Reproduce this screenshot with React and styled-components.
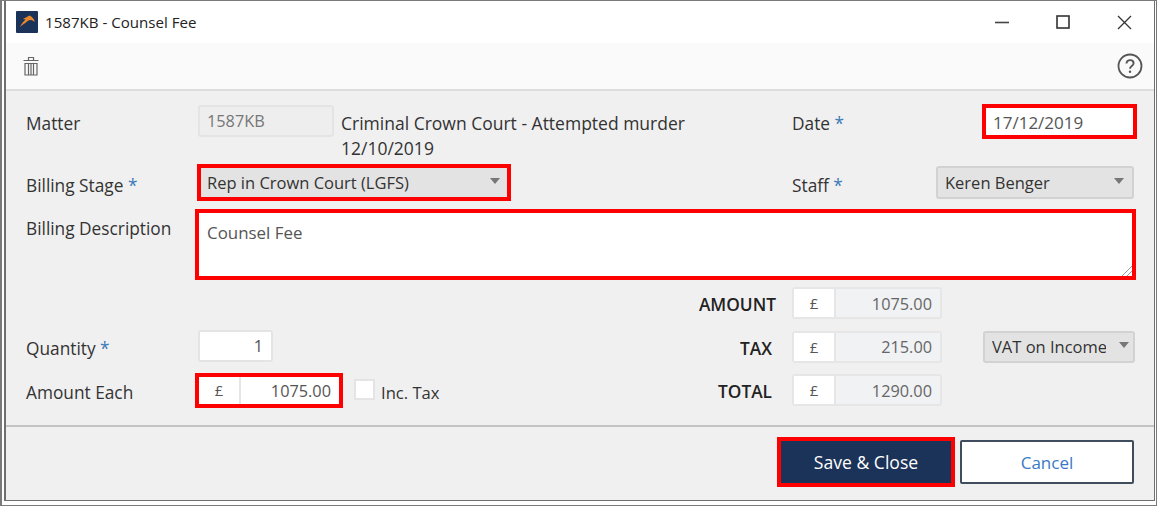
import React from 'react'
import styled, { createGlobalStyle } from 'styled-components'

const GlobalStyle = createGlobalStyle`
  html, body {
    margin: 0;
    padding: 0;
    background: #fff;
  }
  * {
    box-sizing: border-box;
  }
`

const Frame = styled.div`
  width: 1157px;
  height: 506px;
  border: 1px solid #7a7a7a;
  border-left-width: 2px;
  padding: 0 1px 4px 2px;
  font-family: "Open Sans", "Noto Sans", sans-serif;
  font-size: 17.3px;
  color: #333;
`

const Window = styled.div`
  height: 100%;
  display: flex;
  flex-direction: column;
  background: #f0f0f0;
  border: 2px solid #6f6f6f;
  border-top: 0;
  border-right-width: 1px;
  border-bottom-width: 1px;
`

const TitleBar = styled.div`
  height: 42px;
  flex: none;
  display: flex;
  align-items: center;
  background: #fff;
  padding-left: 10px;
`

const AppIcon = styled.svg`
  width: 22px;
  height: 22px;
  margin-right: 7px;
`

const Title = styled.span`
  font-size: 15.1px;
  color: #222;
`

const WindowButtons = styled.div`
  margin-left: auto;
  display: flex;
  gap: 47px;
  padding-right: 22px;
  align-items: center;
`

const Toolbar = styled.div`
  height: 48px;
  flex: none;
  display: flex;
  align-items: center;
  justify-content: space-between;
  background: #fafafa;
  border-bottom: 2px solid #ddd;
  padding: 0 11px 0 17px;
`

const Form = styled.div`
  height: 336px;
  flex: none;
  padding: 14px 19px 0 20px;
  border-bottom: 2px solid #c4c4c4;
`

const Row = styled.div`
  display: grid;
  grid-template-columns: 172px 594px 1fr;
  height: ${props => props.$height}px;
`

const Label = styled.label`
  line-height: 22px;
  padding-top: ${props => props.$top || 0}px;
  color: #333;
`

const Star = styled.span`
  color: #3d7ab8;
`

const Field = styled.div`
  height: 32px;
  width: ${props => props.$width}px;
  display: flex;
  align-items: center;
  flex: none;
  padding: 0 8px 0 7px;
  font-size: 16.3px;
  background: ${props => props.$bg || '#fff'};
  color: ${props => props.$color || '#555'};
  border: 2px solid #e4e4e4;
  border-radius: 3px;
  justify-content: ${props => props.$right ? 'flex-end' : 'flex-start'};
`

const DateField = styled.div`
  width: 155px;
  height: 35px;
  margin: -1px 0 0 46px;
  display: flex;
  align-items: center;
  padding: 2px 7px 0;
  font-size: 17px;
  background: #fff;
  color: #555;
  border: 4px solid #f00;
`

const MatterCell = styled.div`
  display: flex;
  gap: 7px;
`

const MatterText = styled.div`
  font-size: 17.5px;
  line-height: 25px;
  width: 370px;
  padding-top: 6px;
`

const RightCell = styled.div`
  display: grid;
  grid-template-columns: 144px 1fr;
`

const Select = styled.div`
  height: ${props => props.$height || 33}px;
  width: ${props => props.$width}px;
  display: flex;
  align-items: center;
  justify-content: space-between;
  font-size: 16.5px;
  background: #e4e3e3;
  color: #333;
  padding: 0 ${props => props.$caretPad || 8}px 0 7px;
  border: 2px solid #d2d2d2;
  border-radius: 3px;
  white-space: nowrap;
  overflow: hidden;
`

const StageSelect = styled(Select)`
  margin: -2px 0 0 -1px;
  padding: 0 7px 0 6px;
  border: 4px solid #f00;
  border-radius: 0;
`

const SelectText = styled.span`
  overflow: hidden;
  width: ${props => props.$width ? `${props.$width}px` : 'auto'};
`

const Caret = styled.span`
  width: 0;
  height: 0;
  flex: none;
  margin-top: -3px;
  border-left: 5.5px solid transparent;
  border-right: 5.5px solid transparent;
  border-top: 6px solid #777;
`

const TextArea = styled.div`
  position: relative;
  height: 71px;
  width: 941px;
  margin: -2px 0 0 -3px;
  background: #fff;
  border: 4px solid #f00;
  padding: 9px 8px;
  font-size: 16.9px;
  color: #555;
  line-height: 22px;
`

const Grip = styled.svg`
  position: absolute;
  right: 0;
  bottom: 0;
  width: 11px;
  height: 11px;
`

const Bottom = styled.div`
  display: flex;
`

const LeftColumn = styled.div`
  width: 766px;
  padding-top: 44px;
`

const LeftRow = styled.div`
  display: flex;
  height: 44px;
  align-items: center;
`

const LeftLabel = styled.label`
  width: 172px;
  padding-top: 4px;
  flex: none;
`

const CheckBox = styled.span`
  width: 21px;
  height: 21px;
  background: #fff;
  border: 2px solid #e4e4e4;
  margin: -1px 6px 0 11px;
`

const CheckLabel = styled.span`
  font-size: 16.6px;
  padding-top: 4px;
`

const RightColumn = styled.div`
  flex: 1;
  margin-left: -165px;
  padding-top: 7px;
  display: flex;
  flex-direction: column;
  gap: 11.5px;
`

const TotalRow = styled.div`
  display: flex;
  align-items: center;
  height: 32px;
`

const TotalLabel = styled.span`
  width: 165px;
  padding-top: 3px;
  padding-right: ${props => props.$pad ?? 20}px;
  white-space: nowrap;
  text-align: right;
  font-weight: 600;
  color: #222;
  flex: none;
`

const MoneyGroup = styled.div`
  display: flex;
  width: ${props => props.$highlight ? 148 : 150}px;
  height: ${props => props.$highlight ? 35 : 32}px;
  flex: none;
  margin-left: ${props => props.$highlight ? -3 : 0}px;
  border: ${props => props.$highlight ? '4px solid #f00' : '2px solid #e6e6e6'};
  border-radius: ${props => props.$highlight ? 0 : 3}px;
  background: #fff;
  color: #555;
  font-size: 16.3px;
`

const Pound = styled.span`
  width: 42px;
  flex: none;
  display: flex;
  align-items: center;
  justify-content: center;
  font-size: 15px;
  background: #fff;
  border-right: 2px solid #e6e6e6;
`

const MoneyValue = styled.span`
  flex: 1;
  display: flex;
  align-items: center;
  justify-content: flex-end;
  padding: 1px 8px 0 0;
  background: ${props => props.$readOnly ? '#f1f2f4' : '#fff'};
  color: ${props => props.$readOnly ? '#666' : '#555'};
`

const TaxSelect = styled.div`
  margin-left: 41px;
`

const Footer = styled.div`
  flex: 1;
  display: flex;
  justify-content: flex-end;
  align-items: flex-start;
  gap: 5px;
  padding: 10px 20px 0 0;
`

const SaveButton = styled.div`
  width: 178px;
  height: 50px;
  display: flex;
  align-items: center;
  justify-content: center;
  font-size: 17.6px;
  background: #1b3358;
  color: #fff;
  border: 4px solid #f00;
`

const CancelButton = styled.div`
  width: 174px;
  height: 44px;
  margin-top: 3px;
  display: flex;
  align-items: center;
  justify-content: center;
  font-size: 17px;
  background: #fff;
  color: #3a78c4;
  border: 2px solid #3f4d5f;
  border-radius: 2px;
`

const Money = ({ value, readOnly, highlight }) => (
  <MoneyGroup $highlight={highlight}>
    <Pound>£</Pound>
    <MoneyValue $readOnly={readOnly}>{value}</MoneyValue>
  </MoneyGroup>
)

const App = () => {
  return (
    <Frame>
      <GlobalStyle />
      <Window>
        <TitleBar>
          <AppIcon viewBox="0 0 22 22">
            <rect width="22" height="22" rx="1" fill="#1b3358" />
            <path d="M4 16C6 12 8 10 9.5 8.5L7 8L13.5 4.5C16 5.5 18 8 19 11C17 9.5 15.5 9 14 9C12 9.5 11 10.5 10 11.5C8 12.5 6 14 4 16Z" fill="#e8872b" />
          </AppIcon>
          <Title>1587KB - Counsel Fee</Title>
          <WindowButtons>
            <svg width="14" height="14" viewBox="0 0 14 14"><path d="M0 7.5h14" stroke="#444" strokeWidth="1.6" /></svg>
            <svg width="14" height="14" viewBox="0 0 14 14"><rect x="1" y="1" width="12" height="12" fill="none" stroke="#333" strokeWidth="1.6" /></svg>
            <svg width="15" height="15" viewBox="0 0 15 15"><path d="M1 1l13 13M14 1L1 14" stroke="#333" strokeWidth="1.3" /></svg>
          </WindowButtons>
        </TitleBar>
        <Toolbar>
          <svg width="16" height="20" viewBox="0 0 16 20" fill="none" stroke="#666" strokeWidth="1.2">
            <path d="M0.5 4.5h15M5.5 4.5V1.5h5v3M2 7.5h12v11.5H2zM5.5 7.5v11.5M8 7.5v11.5M10.5 7.5v11.5" />
          </svg>
          <svg width="26" height="26" viewBox="0 0 26 26">
            <circle cx="13" cy="13" r="11.5" fill="none" stroke="#555" strokeWidth="1.8" />
            <path d="M9.5 10.5c0-2.2 1.6-3.4 3.6-3.4s3.5 1.2 3.5 3.1c0 2.9-3.6 2.7-3.6 5.5" fill="none" stroke="#555" strokeWidth="1.9" />
            <circle cx="13" cy="18.8" r="1.2" fill="#555" />
          </svg>
        </Toolbar>
        <Form>
          <Row $height={61}>
            <Label $top={8}>Matter</Label>
            <MatterCell>
              <Field $width={136} $bg="#eeeeee" $color="#777">1587KB</Field>
              <MatterText>Criminal Crown Court - Attempted murder 12/10/2019</MatterText>
            </MatterCell>
            <RightCell>
              <Label $top={8}>Date <Star>*</Star></Label>
              <DateField>17/12/2019</DateField>
            </RightCell>
          </Row>
          <Row $height={45}>
            <Label $top={9}>Billing Stage <Star>*</Star></Label>
            <StageSelect $width={314} $height={37}>
              <span>Rep in Crown Court (LGFS)</span>
              <Caret />
            </StageSelect>
            <RightCell>
              <Label $top={9}>Staff <Star>*</Star></Label>
              <Select $width={198}>
                <span>Keren Benger</span>
                <Caret />
              </Select>
            </RightCell>
          </Row>
          <Row $height={69}>
            <Label $top={7}>Billing Description</Label>
            <TextArea>
              Counsel Fee
              <Grip viewBox="0 0 11 11"><path d="M1 11L11 1M6 11l5-5" stroke="#999" strokeWidth="1" /></Grip>
            </TextArea>
          </Row>
          <Bottom>
            <LeftColumn>
              <LeftRow>
                <LeftLabel>Quantity <Star>*</Star></LeftLabel>
                <Field $width={75} $right>1</Field>
              </LeftRow>
              <LeftRow>
                <LeftLabel>Amount Each</LeftLabel>
                <Money value="1075.00" highlight />
                <CheckBox />
                <CheckLabel>Inc. Tax</CheckLabel>
              </LeftRow>
            </LeftColumn>
            <RightColumn>
              <TotalRow>
                <TotalLabel $pad={16}>AMOUNT</TotalLabel>
                <Money value="1075.00" readOnly />
              </TotalRow>
              <TotalRow>
                <TotalLabel>TAX</TotalLabel>
                <Money value="215.00" readOnly />
                <TaxSelect>
                  <Select $width={152} $height={32} $caretPad={4}>
                    <SelectText $width={114}>VAT on Income</SelectText>
                    <Caret />
                  </Select>
                </TaxSelect>
              </TotalRow>
              <TotalRow>
                <TotalLabel>TOTAL</TotalLabel>
                <Money value="1290.00" readOnly />
              </TotalRow>
            </RightColumn>
          </Bottom>
        </Form>
        <Footer>
          <SaveButton>Save &amp; Close</SaveButton>
          <CancelButton>Cancel</CancelButton>
        </Footer>
      </Window>
    </Frame>
  )
}

export default App
